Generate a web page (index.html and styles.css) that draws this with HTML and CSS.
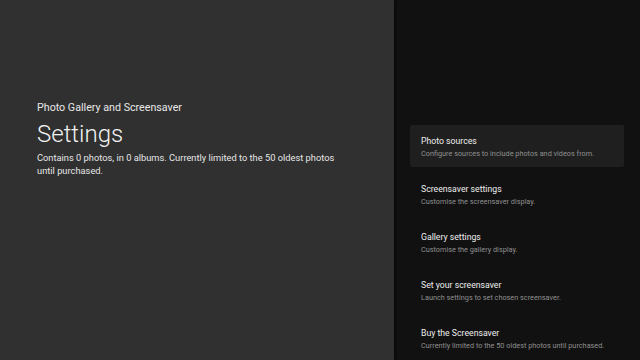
FILE: index.html
```html
<!DOCTYPE html>
<html>
<head>
<meta charset="utf-8">
<link rel="stylesheet" href="styles.css">
</head>
<body>
<div class="screen">
  <div class="left">
    <div class="app">Photo Gallery and Screensaver</div>
    <div class="heading">Settings</div>
    <div class="desc">Contains 0 photos, in 0 albums. Currently limited to the 50 oldest photos until purchased.</div>
  </div>
  <div class="right">
    <div class="list">
      <div class="item active">
        <div class="title">Photo sources</div>
        <div class="sub">Configure sources to include photos and videos from.</div>
      </div>
      <div class="item">
        <div class="title">Screensaver settings</div>
        <div class="sub">Customise the screensaver display.</div>
      </div>
      <div class="item">
        <div class="title">Gallery settings</div>
        <div class="sub">Customise the gallery display.</div>
      </div>
      <div class="item">
        <div class="title">Set your screensaver</div>
        <div class="sub">Launch settings to set chosen screensaver.</div>
      </div>
      <div class="item">
        <div class="title">Buy the Screensaver</div>
        <div class="sub">Currently limited to the 50 oldest photos until purchased.</div>
      </div>
    </div>
  </div>
</div>
</body>
</html>
```
FILE: styles.css
```css
html, body {
  margin: 0;
  padding: 0;
  width: 640px;
  height: 360px;
  overflow: hidden;
  background: #111111;
  font-family: Roboto, "Liberation Sans", sans-serif;
}
.screen {
  display: flex;
  width: 640px;
  height: 360px;
}
.left {
  width: 394px;
  flex: none;
  background: #303030;
  box-shadow: 2px 0 3px rgba(0,0,0,0.5);
  box-sizing: border-box;
  padding: 101px 30px 0 37px;
  color: #f0f0f0;
  position: relative;
  z-index: 1;
}
.app {
  font-size: 10.7px;
  line-height: 14px;
  color: #e8e8e8;
}
.heading {
  font-size: 24px;
  font-weight: 300;
  line-height: 28px;
  margin-top: 5px;
  color: #f2f2f2;
}
.desc {
  font-size: 9.3px;
  line-height: 12.5px;
  margin-top: 4px;
  color: #e6e6e6;
  width: 310px;
}
.right {
  flex: 1;
  background: #111111;
  padding: 125px 16px 0 16px;
}
.list {
  display: flex;
  flex-direction: column;
  gap: 6px;
}
.item {
  height: 42px;
  box-sizing: border-box;
  padding: 10px 10px 0 11px;
  border-radius: 2px;
}
.item.active {
  background: #1f1f1f;
}
.title {
  font-size: 8.7px;
  line-height: 12px;
  color: #eeeeee;
}
.sub {
  font-size: 7.3px;
  line-height: 10px;
  color: #8f8f8f;
  margin-top: 2px;
}
```
